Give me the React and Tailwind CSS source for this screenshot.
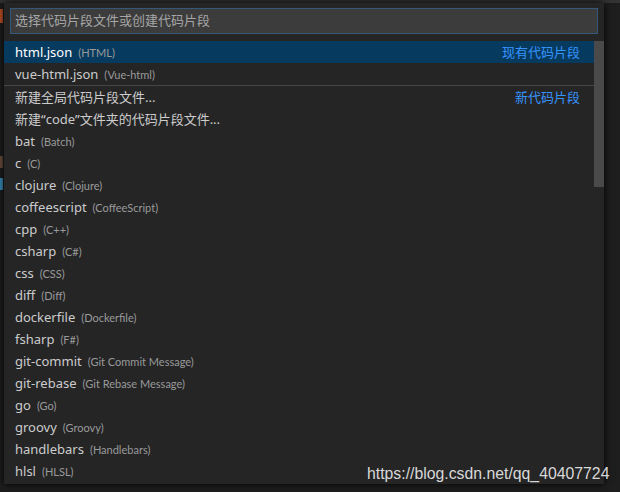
import React from "react";

const rows = [
  ["bat", "Batch"],
  ["c", "C"],
  ["clojure", "Clojure"],
  ["coffeescript", "CoffeeScript"],
  ["cpp", "C++"],
  ["csharp", "C#"],
  ["css", "CSS"],
  ["diff", "Diff"],
  ["dockerfile", "Dockerfile"],
  ["fsharp", "F#"],
  ["git-commit", "Git Commit Message"],
  ["git-rebase", "Git Rebase Message"],
  ["go", "Go"],
  ["groovy", "Groovy"],
  ["handlebars", "Handlebars"],
  ["hlsl", "HLSL"],
];

const font = { fontFamily: '"Noto Sans", "Noto Sans CJK SC", sans-serif' };

function Row({ label, desc, right, selected }) {
  return (
    <div
      className={`flex items-center h-[22px] pl-[11px] pr-[24px] text-[13px] leading-none ${
        selected ? "bg-[#063b5f] text-white" : "text-[#cccccc]"
      }`}
    >
      <span>{label}</span>
      {desc && (
        <span
          className="ml-[6px] text-[11px] text-[#9a9a9a]"
          style={{ fontFamily: 'Lato, "Noto Sans", sans-serif' }}
        >
          ({desc})
        </span>
      )}
      {right && <span className="ml-auto text-[#3794ff] text-[13px]">{right}</span>}
    </div>
  );
}

export default function App() {
  return (
    <div className="relative w-[620px] h-[492px] bg-[#1e1e1e] overflow-hidden" style={font}>
      <div className="h-[3px] bg-[#333333]" />
      <div className="flex">
        <div className="w-[4px] flex flex-col">
          <div className="h-[6px]" />
          <div className="h-[14px] bg-[#c4522a] w-[3px]" />
          <div className="h-[133px]" />
          <div className="h-[12px] bg-[#6b5040] w-[3px]" />
          <div className="h-[10px]" />
          <div className="h-[12px] bg-[#3a8fc0] w-[3px]" />
        </div>
        <div className="relative w-[600px] h-[481px] bg-[#252526] shadow-[0_0_8px_#000]">
          <div className="mx-[6px] mt-[5px] h-[26px] bg-[#3c3c3c] border border-[#35587a] flex items-center pl-[4px] text-[13px] text-[#a6a6a6]">
            选择代码片段文件或创建代码片段
          </div>
          <div className="mt-[7px]">
            <Row label="html.json" desc="HTML" right="现有代码片段" selected />
            <Row label="vue-html.json" desc="Vue-html" />
            <div className="h-px bg-[#464647]" />
            <Row label="新建全局代码片段文件..." right="新代码片段" />
            <Row label="新建“code”文件夹的代码片段文件..." />
            {rows.map(([l, d]) => (
              <Row key={l} label={l} desc={d} />
            ))}
          </div>
          <div className="absolute left-[590px] top-[38px] w-[10px] h-[146px] bg-[#4a4a4b]" />
        </div>
      </div>
      <div
        className="absolute left-[367px] top-[462px] text-[15.8px] text-[#d8d8d8]"
        style={{ fontFamily: '"Liberation Sans", Arial, sans-serif' }}
      >
        https://blog.csdn.net/qq_40407724
      </div>
    </div>
  );
}
